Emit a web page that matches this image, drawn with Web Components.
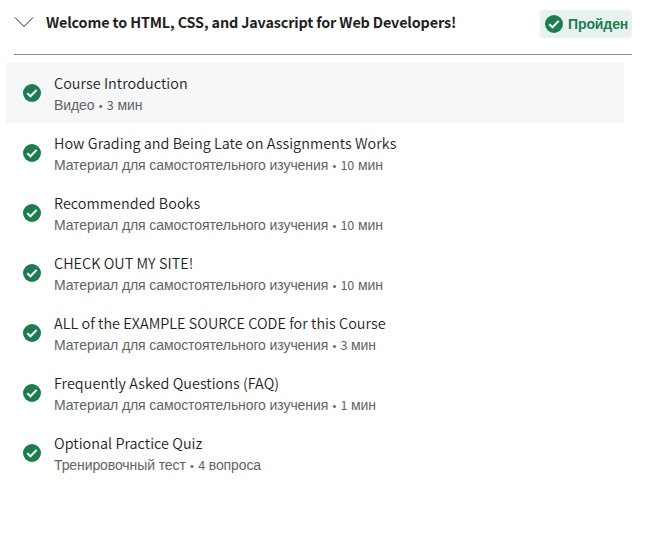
<!DOCTYPE html>
<html lang="ru">
<head>
<meta charset="utf-8">
<title>Course module</title>
<style>
body{margin:0;background:#fff;color:#1f1f1f;font-family:"Noto Sans CJK SC","Liberation Sans",sans-serif}
</style>
</head>
<body>
<course-module heading="Welcome to HTML, CSS, and Javascript for Web Developers!" status="Пройден">
<course-item active kind="Видео" count="3" unit="мин">Course Introduction</course-item>
<course-item kind="Материал для самостоятельного изучения" count="10" unit="мин">How Grading and Being Late on Assignments Works</course-item>
<course-item kind="Материал для самостоятельного изучения" count="10" unit="мин">Recommended Books</course-item>
<course-item kind="Материал для самостоятельного изучения" count="10" unit="мин">CHECK OUT MY SITE!</course-item>
<course-item kind="Материал для самостоятельного изучения" count="3" unit="мин">ALL of the EXAMPLE SOURCE CODE for this Course</course-item>
<course-item kind="Материал для самостоятельного изучения" count="1" unit="мин">Frequently Asked Questions (FAQ)</course-item>
<course-item kind="Тренировочный тест" count="4" unit="вопроса">Optional Practice Quiz</course-item>
</course-module>
<script>
class CheckIcon extends HTMLElement{
  constructor(){
    super();
    this.attachShadow({mode:'open'}).innerHTML=`
<style>:host{display:block;width:18px;height:18px;flex:none}svg{display:block}</style>
<svg width="18" height="18" viewBox="0 0 18 18"><circle cx="9" cy="9" r="9" fill="#1d7c50"/><path d="M4.3 9.2 7.5 12.3 13.7 5.9" fill="none" stroke="#fff" stroke-width="2"/></svg>`;
  }
}
class CourseItem extends HTMLElement{
  constructor(){
    super();
    this.attachShadow({mode:'open'}).innerHTML=`
<style>
:host{display:flex;align-items:center;gap:13px;height:60px;box-sizing:border-box;padding-left:17px}
:host([active]){background:#f5f7f8}
.title{font-size:14.4px;line-height:22px;font-weight:350;letter-spacing:.04px;white-space:nowrap}
.meta{font-size:14px;line-height:20px;padding-top:1px;margin-bottom:-1px;color:#636363;letter-spacing:-.095px;font-family:"Liberation Sans",Arial,sans-serif;white-space:nowrap}
.dot{font-size:11px;line-height:1;padding:0 .5px}
.count{font-family:"Noto Sans CJK SC",sans-serif;font-size:12.6px;line-height:1;letter-spacing:-.2px}
</style>
<check-icon></check-icon>
<div><div class="title"><slot></slot></div>
<div class="meta"><span class="kind"></span> <span class="dot">•</span> <span class="count"></span> <span class="unit"></span></div></div>`;
  }
  connectedCallback(){
    for(const k of ['kind','count','unit'])this.shadowRoot.querySelector('.'+k).textContent=this.getAttribute(k);
  }
}
class CourseModule extends HTMLElement{
  constructor(){
    super();
    this.attachShadow({mode:'open'}).innerHTML=`
<style>
:host{display:block;width:632px}
header{display:flex;align-items:center;height:55px;box-sizing:border-box;margin-left:14px;border-bottom:1px solid #8d8a94;padding-bottom:7px}
.chev{display:block;width:20px;height:12px;flex:none;margin:-3px 12px 0 0}
h2{margin:-3px 0 0;flex:1;font-size:14.4px;line-height:24px;font-weight:700;letter-spacing:-.15px;white-space:nowrap}
.badge{display:flex;align-items:center;gap:5px;box-sizing:border-box;width:92px;height:28px;padding-left:5px;border-radius:4px;background:#e8f2ee;color:#1d7c50;font:700 14px "Liberation Sans",Arial,sans-serif;letter-spacing:-.1px}
.list{margin:8px 8px 0 6px}
</style>
<header><svg class="chev" viewBox="0 0 20 12"><path d="M1 1.5 10 10.5 19 1.5" fill="none" stroke="#1f1f1f"/></svg>
<h2></h2><div class="badge"><check-icon></check-icon><span></span></div></header>
<div class="list"><slot></slot></div>`;
  }
  connectedCallback(){
    this.shadowRoot.querySelector('h2').textContent=this.getAttribute('heading');
    this.shadowRoot.querySelector('.badge span').textContent=this.getAttribute('status');
  }
}
customElements.define('check-icon',CheckIcon);
customElements.define('course-item',CourseItem);
customElements.define('course-module',CourseModule);
</script>
</body>
</html>
